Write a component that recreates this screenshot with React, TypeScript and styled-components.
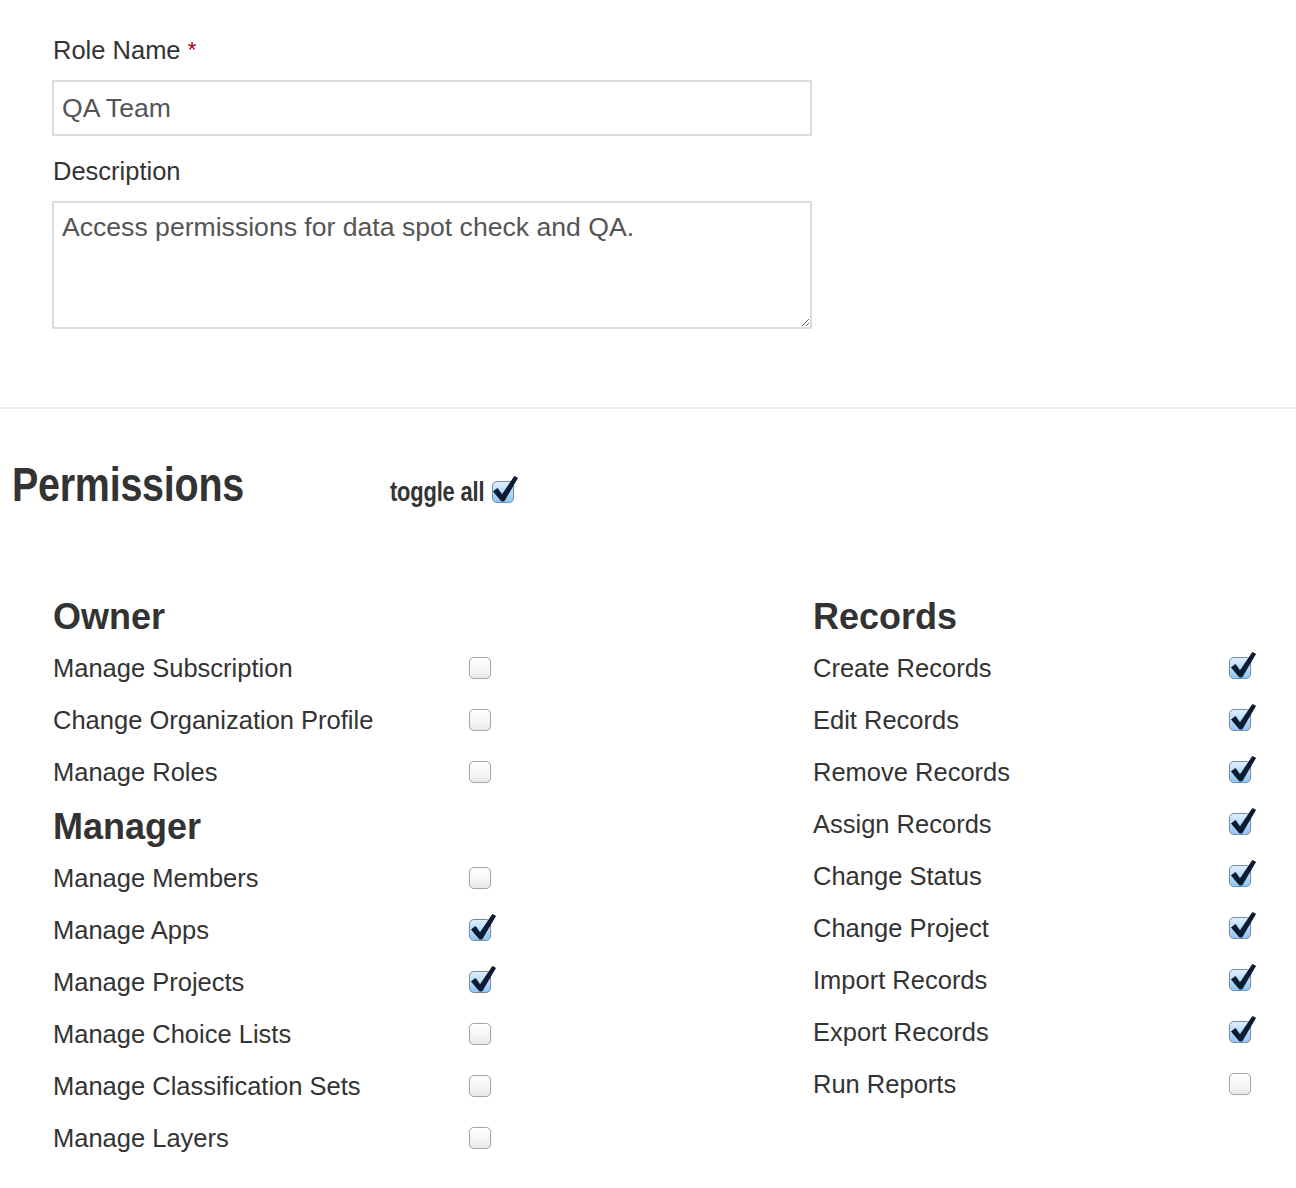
import React from 'react';
import styled, { createGlobalStyle } from 'styled-components';

const GlobalStyle = createGlobalStyle`
  body {
    margin: 0;
    background: #fff;
    color: #333;
    font-family: "Liberation Sans", Helvetica, Arial, sans-serif;
  }
`;

type Perm = { label: string; checked: boolean };
type Group = { title: string; items: Perm[] };

const leftGroups: Group[] = [
  {
    title: 'Owner',
    items: [
      { label: 'Manage Subscription', checked: false },
      { label: 'Change Organization Profile', checked: false },
      { label: 'Manage Roles', checked: false },
    ],
  },
  {
    title: 'Manager',
    items: [
      { label: 'Manage Members', checked: false },
      { label: 'Manage Apps', checked: true },
      { label: 'Manage Projects', checked: true },
      { label: 'Manage Choice Lists', checked: false },
      { label: 'Manage Classification Sets', checked: false },
      { label: 'Manage Layers', checked: false },
    ],
  },
];

const rightGroups: Group[] = [
  {
    title: 'Records',
    items: [
      { label: 'Create Records', checked: true },
      { label: 'Edit Records', checked: true },
      { label: 'Remove Records', checked: true },
      { label: 'Assign Records', checked: true },
      { label: 'Change Status', checked: true },
      { label: 'Change Project', checked: true },
      { label: 'Import Records', checked: true },
      { label: 'Export Records', checked: true },
      { label: 'Run Reports', checked: false },
    ],
  },
];

const CheckBox = ({ checked }: { checked: boolean }) => (
  <Box $checked={checked} role="checkbox" aria-checked={checked}>
    {checked && (
      <Tick viewBox="0 0 30 30" width="30" height="30">
        <path
          d="M2.5 18.5 L6.5 15.5 L11 22 L23.5 3.5 L26.5 5 L13 28 L10.5 28 Z"
          fill="#0c1b33"
          stroke="#0c1b33"
          strokeWidth="1"
          strokeLinejoin="round"
        />
      </Tick>
    )}
  </Box>
);

const PermissionColumn = ({ groups }: { groups: Group[] }) => (
  <Column>
    {groups.map((g) => (
      <React.Fragment key={g.title}>
        <GroupTitle>{g.title}</GroupTitle>
        {g.items.map((p) => (
          <Row key={p.label}>
            <RowLabel>{p.label}</RowLabel>
            <CheckBox checked={p.checked} />
          </Row>
        ))}
      </React.Fragment>
    ))}
  </Column>
);

export default function App() {
  return (
    <>
      <GlobalStyle />
      <Page>
        <Form>
          <Label>
            Role Name <Required>*</Required>
          </Label>
          <TextInput defaultValue="QA Team" />
          <Label $top={20}>Description</Label>
          <TextArea defaultValue="Access permissions for data spot check and QA." />
        </Form>
        <Divider />
        <PermHeader>
          <PermTitle>
            <Narrow $scale={0.805}>Permissions</Narrow>
          </PermTitle>
          <Toggle>
            <ToggleText>toggle all</ToggleText>
            <CheckBox checked />
          </Toggle>
        </PermHeader>
        <Columns>
          <PermissionColumn groups={leftGroups} />
          <PermissionColumn groups={rightGroups} />
        </Columns>
      </Page>
    </>
  );
}

const Page = styled.div`
  width: 1296px;
  min-height: 1188px;
`;

const Form = styled.form`
  display: flex;
  flex-direction: column;
  width: 760px;
  padding: 35px 0 0 52px;
`;

const Label = styled.label<{ $top?: number }>`
  font-size: 25.5px;
  line-height: 30px;
  color: #333;
  margin-top: ${(p) => p.$top ?? 0}px;
  margin-bottom: 15px;
  margin-left: 1px;
`;

const Required = styled.span`
  color: #b00000;
  font-size: 22px;
  vertical-align: top;
`;

const fieldStyle = `
  box-sizing: border-box;
  width: 760px;
  border: 2px solid #dcdcdc;
  background: #fff;
  color: #555;
  font-family: "Liberation Sans", Helvetica, Arial, sans-serif;
  font-size: 26.6px;
  outline: none;
  margin: 0;
`;

const TextInput = styled.input`
  ${fieldStyle}
  height: 56px;
  padding: 0 8px;
`;

const TextArea = styled.textarea`
  ${fieldStyle}
  height: 128px;
  padding: 9px 8px;
  line-height: 30px;
  resize: vertical;
`;

const Divider = styled.hr`
  border: 0;
  height: 2px;
  background: #ececec;
  margin: 78px 0 0;
`;

const PermHeader = styled.div`
  display: flex;
  align-items: baseline;
  padding: 47px 0 0 12px;
`;

const PermTitle = styled.h2`
  margin: 0;
  font-family: "Liberation Sans", Arial, sans-serif;
  font-weight: 700;
  font-size: 49px;
  line-height: 56px;
  letter-spacing: -0.3px;
  color: #333;
  width: 378px;
  white-space: nowrap;
`;

const Narrow = styled.span<{ $scale: number }>`
  display: inline-block;
  transform: scaleX(${(p) => p.$scale});
  transform-origin: left center;
`;

const Toggle = styled.span`
  display: inline-flex;
  align-items: baseline;
  gap: 8px;
  font-family: "Liberation Sans", Arial, sans-serif;
  font-weight: 700;
  font-size: 28px;
  color: #333;
`;

const ToggleText = styled.span`
  display: inline-block;
  transform: scaleX(0.78);
  transform-origin: left center;
  margin-right: -27px;
  letter-spacing: -0.2px;
`;

const Columns = styled.div`
  display: grid;
  grid-template-columns: 438px 438px;
  column-gap: 322px;
  padding: 76px 0 30px 53px;
  align-items: start;
`;

const Column = styled.div`
  display: flex;
  flex-direction: column;
`;

const GroupTitle = styled.h3`
  margin: 0;
  padding-top: 3px;
  font-size: 36px;
  font-weight: 700;
  line-height: 51px;
  color: #333;
`;

const Row = styled.div`
  display: flex;
  align-items: center;
  justify-content: space-between;
  height: 52px;
`;

const RowLabel = styled.span`
  font-size: 25.5px;
  color: #333;
`;

const Box = styled.span<{ $checked: boolean }>`
  position: relative;
  display: inline-block;
  flex: none;
  box-sizing: border-box;
  width: 22px;
  height: 22px;
  border-radius: 5px;
  border: 1.5px solid ${(p) => (p.$checked ? '#7d8ea3' : '#a8a8a8')};
  background: ${(p) =>
    p.$checked
      ? 'linear-gradient(#dcefff 0%, #b5dbfb 50%, #8ec6f3 100%)'
      : 'linear-gradient(#ffffff 0%, #f6f6f6 50%, #e9e9e9 100%)'};
  box-shadow: 0 0 1px rgba(0, 0, 0, 0.25);
  align-self: center;
`;

const Tick = styled.svg`
  position: absolute;
  left: -1.5px;
  top: -9.5px;
  overflow: visible;
`;
